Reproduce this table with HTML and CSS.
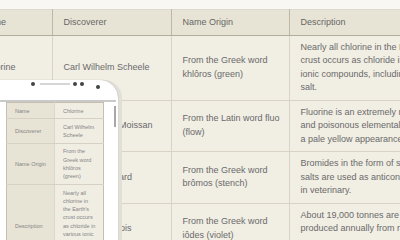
FILE: index.html
```html
<!DOCTYPE html>
<html lang="en">
<head>
  <meta charset="UTF-8">
  <title>Halogens Table</title>
  <link rel="stylesheet" href="styles.css">
</head>
<body>
  <div class="page">
    <table class="elements">
      <colgroup>
        <col class="col-name">
        <col class="col-disc">
        <col class="col-orig">
        <col class="col-desc">
      </colgroup>
      <thead>
        <tr>
          <th>Name</th>
          <th>Discoverer</th>
          <th>Name Origin</th>
          <th>Description</th>
        </tr>
      </thead>
      <tbody>
        <tr>
          <td>Chlorine</td>
          <td>Carl Wilhelm Scheele</td>
          <td>From the Greek word khlôros (green)</td>
          <td>Nearly all chlorine in the Earth's crust occurs as chloride in various ionic compounds, including table salt.</td>
        </tr>
        <tr>
          <td>Fluorine</td>
          <td>Joseph Henri Moissan</td>
          <td>From the Latin word fluo (flow)</td>
          <td>Fluorine is an extremely reactive and poisonous elemental gas with a pale yellow appearance.</td>
        </tr>
        <tr>
          <td>Bromine</td>
          <td>Antoine J. Balard</td>
          <td>From the Greek word brômos (stench)</td>
          <td>Bromides in the form of simple salts are used as anticonvulsants in veterinary.</td>
        </tr>
        <tr>
          <td>Iodine</td>
          <td>Bernard Courtois</td>
          <td>From the Greek word iôdes (violet)</td>
          <td>About 19,000 tonnes are produced annually from natural sources.</td>
        </tr>
      </tbody>
    </table>

    <div class="phone">
      <div class="phone-top">
        <span class="dot"></span>
        <span class="speaker"></span>
        <span class="dot"></span>
        <span class="dot"></span>
        <span class="dot cam"></span>
      </div>
      <div class="screen">
        <table class="mini">
          <colgroup>
            <col class="mini-key">
            <col class="mini-val">
          </colgroup>
          <tr><th>Name</th><td>Chlorine</td></tr>
          <tr><th>Discoverer</th><td>Carl Wilhelm Scheele</td></tr>
          <tr><th>Name Origin</th><td>From the Greek word khlôros (green)</td></tr>
          <tr><th>Description</th><td>Nearly all chlorine in the Earth's crust occurs as chloride in various ionic compounds, including table salt.</td></tr>
        </table>
        <span class="scroll"></span>
      </div>
    </div>
  </div>
</body>
</html>
```

FILE: styles.css
```css
body {
  margin: 0;
  padding: 0;
  background: #f8f7f3;
  font-family: 'Liberation Sans', Arial, sans-serif;
  overflow: hidden;
}
.page {
  position: relative;
  width: 400px;
  height: 240px;
  overflow: hidden;
  padding-top: 9px;
  box-sizing: border-box;
}

/* big table */
.elements {
  border-collapse: collapse;
  table-layout: fixed;
  width: 476px;
  margin-left: -29px;
  border-top: 1px solid #dedad0;
  font-size: 9px;
  line-height: 13.5px;
  color: #6a6a6a;
}
.col-name { width: 81px; }
.col-disc { width: 119px; }
.col-orig { width: 118px; }
.col-desc { width: 158px; }
.elements th {
  background: #e8e4d5;
  font-weight: normal;
  text-align: left;
  color: #666;
  padding: 6px 6px 5px 11px;
  border-right: 1px solid #bdb7a6;
  border-bottom: 1px solid #b3ad9c;
}
.elements td {
  background: #f1eee4;
  padding: 5px 6px 5px 11px;
  border-right: 1px solid #d8d3c4;
  border-bottom: 1px solid #d8d3c4;
  vertical-align: middle;
}
.elements td:last-child { padding-right: 10px; }

/* phone mockup */
.phone {
  position: absolute;
  left: -40px;
  top: 80px;
  width: 158px;
  height: 200px;
  background: #fff;
  border-radius: 0 18px 0 0;
  padding: 0 2px 0 12px;
  box-sizing: border-box;
  box-shadow: 0 0 1px rgba(0, 0, 0, 0.35), 4px 0 0 #e2dfd6;
}
.phone-top {
  height: 20px;
  display: flex;
  align-items: flex-start;
  padding: 2px 0 0 59px;
  box-sizing: border-box;
}
.dot {
  width: 4px;
  height: 4px;
  border-radius: 50%;
  background: #444;
  margin-right: 3px;
}
.speaker {
  width: 30px;
  height: 2px;
  background: #d6d6d6;
  margin: 1px 3px 0 2px;
}
.cam {
  margin: 3px 0 0 9px;
}
.screen {
  position: relative;
  height: 180px;
  border-top: 2px solid #c9c9c9;
  background: #fff;
}
.scroll {
  position: absolute;
  right: 0;
  top: 4px;
  width: 2px;
  height: 21px;
  background: #a8a8a8;
}

/* mobile table */
.mini {
  border-collapse: collapse;
  table-layout: fixed;
  width: 97px;
  margin-left: 34px;
  font-size: 5.5px;
  line-height: 8.3px;
  color: #858585;
  border: 1px solid #c4bfaf;
}
.mini-key { width: 48px; }
.mini-val { width: 49px; }
.mini th {
  background: #e7e3d5;
  font-weight: normal;
  text-align: left;
  padding: 3.5px 3px 3.5px 8px;
  border-bottom: 1px solid #d6d1c2;
  border-right: 1px solid #dcd7c8;
}
.mini td {
  background: #f0ede3;
  padding: 3.5px 7px 3.5px 8px;
  border-bottom: 1px solid #d6d1c2;
}
```
